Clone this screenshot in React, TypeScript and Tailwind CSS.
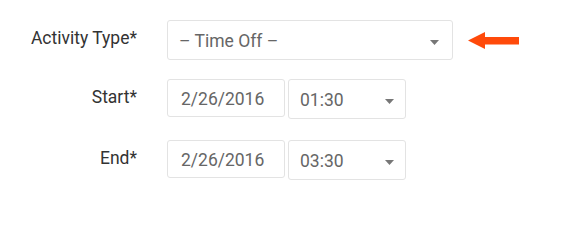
import { useState } from 'react'

const font = { fontFamily: 'Roboto, "Noto Sans", sans-serif' }

function Caret() {
  return (
    <svg width="9" height="5" viewBox="0 0 9 5" className="shrink-0 mt-[2px]">
      <path d="M0 0h9L4.5 5z" fill="#777" />
    </svg>
  )
}

function Arrow() {
  return (
    <svg width="51" height="17" viewBox="0 0 51 17" className="ml-[15px]">
      <path d="M0 8.5L17 0v5h34v7.5H17V17z" fill="#ff4a0a" />
    </svg>
  )
}

function Label({ children }: { children: React.ReactNode }) {
  return <div className="w-[137px] shrink-0 pb-[3px] text-right text-[17.5px] text-[#333]">{children}</div>
}

function Box({ children, className }: { children: React.ReactNode; className?: string }) {
  return (
    <div
      className={
        'flex items-center pt-[2px] border border-[#e3e3e3] rounded-[3px] bg-white text-[17.5px] text-[#666] ' +
        (className ?? '')
      }
    >
      {children}
    </div>
  )
}

function DateTimeRow({ label, date, time }: { label: string; date: string; time: string }) {
  return (
    <div className="flex items-center">
      <Label>{label}</Label>
      <div className="ml-[30px] flex gap-[3px]">
        <Box className="w-[118px] h-[38px] pl-[13px]">{date}</Box>
        <Box className="w-[118px] h-[40px] pl-[11px] pr-[11px] justify-between">
          <span>{time}</span>
          <Caret />
        </Box>
      </div>
    </div>
  )
}

export default function App() {
  const [type] = useState('– Time Off –')
  return (
    <div className="w-[579px] h-[219px] bg-white pt-[20px]" style={font}>
      <div className="flex items-center">
        <Label>Activity Type*</Label>
        <Box className="ml-[30px] w-[286px] h-[40px] pl-[11px] pr-[13px] justify-between">
          <span>{type}</span>
          <Caret />
        </Box>
        <Arrow />
      </div>
      <div className="mt-[19px] flex flex-col gap-[21px]">
        <DateTimeRow label="Start*" date="2/26/2016" time="01:30" />
        <DateTimeRow label="End*" date="2/26/2016" time="03:30" />
      </div>
    </div>
  )
}
